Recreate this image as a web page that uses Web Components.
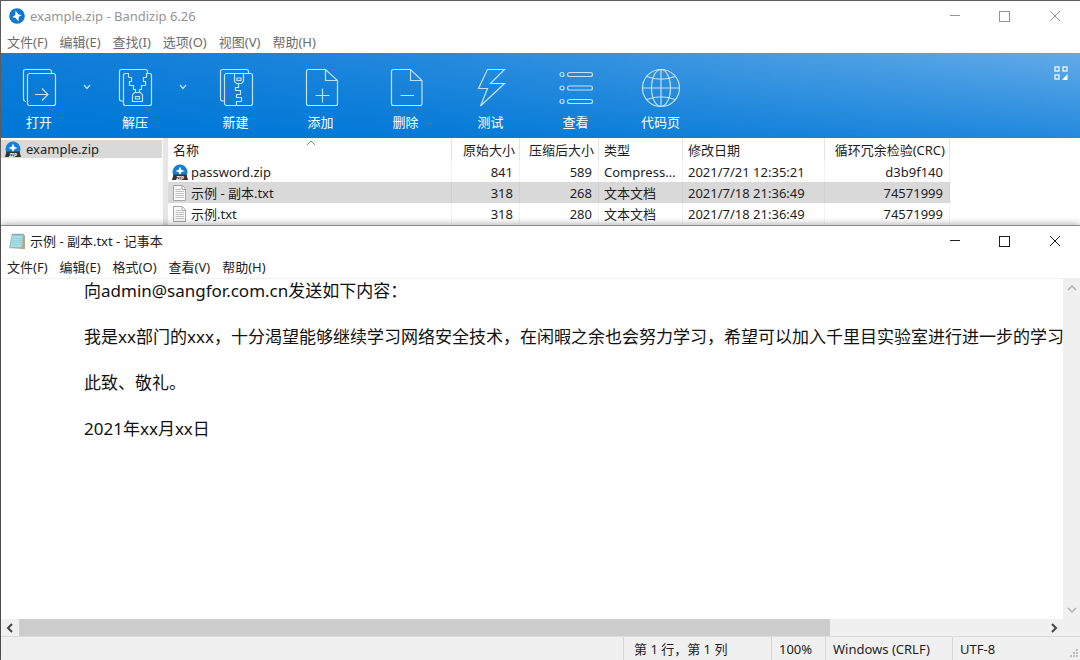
<!DOCTYPE html>
<html lang="zh-CN">
<head>
<meta charset="utf-8">
<title>example.zip - Bandizip 6.26</title>
<style>
  html, body { height: 100%; margin: 0; }
  body {
    font: 13px/20px "Noto Sans", "Noto Sans CJK SC", sans-serif;
    color: #1e1e1e;
    background: #5c5c5e;
    overflow: hidden;
  }
</style>
</head>
<body>
<desktop-view></desktop-view>

<script>
const define = (name, html, init) => customElements.define(name, class extends HTMLElement {
  connectedCallback() {
    if (this.shadowRoot) return;
    this.attachShadow({ mode: 'open' }).innerHTML = html;
    if (init) init.call(this, this.shadowRoot);
  }
});

const BUTTON = 'button{font:inherit;color:inherit;background:none;border:0;padding:0;margin:0;display:flex;align-items:center;justify-content:center}svg{display:block}';

const ICONS = {
  open: '<path d="M7 33.500H6.500Q4.500 33 4.500 31V3.500Q4.500 1.500 6.500 1.500H30.500Q32.500 1.500 32.500 3.500V5"/><rect x="8.500" y="5.500" width="28" height="32" rx="2"/><path d="M16 26.500H29M23 20.500L29 26.500L23 32.500"/>',
  extract: '<path d="M8 33H6.500Q4.500 33 4.500 31V3.500Q4.500 1.500 6.500 1.500H30.500Q32.500 1.500 32.500 3.500V5"/><path d="M13.500 9.500V5.500H10.500Q8.500 5.500 8.500 7.500V35.500Q8.500 37.500 10.500 37.500H34.500Q36.500 37.500 36.500 35.500V7.500Q36.500 5.500 34.500 5.500H31.500V9.500M13.500 9.500H16.500V13.500H14.500V17.500H18.500V21.500H20.500V24.500M31.500 9.500H28.500V13.500H30.500V17.500H26.500V21.500H24.500V24.500"/><path d="M19.500 24.500H25.500L27.500 27V33.500H17.500V27ZM20.500 28.500H24.500V31H20.500Z"/>',
  create: '<path d="M8 33H6.500Q4.500 33 4.500 31V3.500Q4.500 1.500 6.500 1.500H30.500Q32.500 1.500 32.500 3.500V5"/><rect x="8.500" y="5.500" width="28" height="32" rx="2"/><path d="M18.500 6V13.500L20.500 15.500H25.500L27.500 13.500V6M21 10H25V12.500H21ZM22.500 15.500V19.500H19.500V22.500H24.500V26.500H20.500V29.500H25.500V33.500H20.500V37"/>',
  add: '<path d="M24.500 1.500H7.500Q5.500 1.500 5.500 3.500V35.500Q5.500 37.500 7.500 37.500H34.500Q36.500 37.500 36.500 35.500V12.500ZM24.500 1.500V12.500H36.500M21.500 20.500V34.500M14.500 27.500H28.500"/>',
  remove: '<path d="M24.500 1.500H7.500Q5.500 1.500 5.500 3.500V35.500Q5.500 37.500 7.500 37.500H34Q36 37.500 36 35.500V12.500ZM24.500 1.500V12.500H36M14.500 27.500H28"/>',
  test: '<path d="M16.500 1.500H33.500L19.500 15.500H33.500L9.500 38L16.500 20.500H7.500Z"/>',
  view: '<circle cx="6" cy="6.500" r="2"/><circle cx="6" cy="20" r="2"/><circle cx="6" cy="33.500" r="2"/><rect x="11.500" y="4.500" width="25" height="4" rx="2"/><rect x="11.500" y="18" width="25" height="4" rx="2"/><rect x="11.500" y="31.500" width="25" height="4" rx="2"/>',
  codepage: '<circle cx="20" cy="20" r="18.500"/><ellipse cx="20" cy="20" rx="9.500" ry="18.500"/><path d="M20 1.500V38.500M1.500 20H38.500M6 8.500Q20 14 34 8.500M6 31.500Q20 26 34 31.500"/>'
};
const FILES = {
  zip: '<circle cx="8" cy="8" r="7.500" fill="#1280d8"/><path d="M8 2.500L9.300 5.700L12.500 7L9.300 8.300L8 11.500L6.700 8.300L3.500 7L6.700 5.700Z" fill="#fff"/><path d="M1.500 10.500H14.500L16 16H0Z" fill="#333"/><text x="8" y="15.500" text-anchor="middle" font-size="5" font-weight="700" font-style="italic" fill="#fff">ZIP</text>',
  txt: '<path d="M1.500 .500H10.500L13.500 4V15.500H1.500Z" fill="#fafafa" stroke="#a6a6a6"/><path d="M10 1V4.500H13" fill="none" stroke="#a6a6a6"/><path d="M3.500 4.500H9M3.500 6.500H12M3.500 8.500H12M3.500 10.500H12M3.500 12.500H12" stroke="#c0c0c0"/>',
  bandizip: '<circle cx="8" cy="8" r="7.800" fill="#1278cf"/><path d="M6.500 2.500L9.500 6.500L12.800 7L9.700 9L9.500 13.500L6.500 9.700L3.200 9.200L6.300 7Z" fill="#fff"/>',
  notepad: '<path d="M3 1.500H14.500L13 15H.500Z" fill="#8fcbd1" stroke="#78b0b8" stroke-width=".6"/><path d="M14.500 1.500L16 2.500V16H4L13 15Z" fill="#b7a58a"/><path d="M3.300 3H13.500L12.300 14H1.700Z" fill="#a9dde2"/><path d="M3 5.500H13M2.800 7.500H13M2.600 9.500H12.500M2.400 11.500H12.300" stroke="#8fcdd4" stroke-width=".6"/><path d="M3.500 1.200H15" stroke="#667c80" stroke-dasharray="1 1"/>'
};

define('file-icon', '<style>:host{display:block;flex:none;width:16px;height:16px}svg{display:block}</style><svg width="16" height="16" viewBox="0 0 16 16" aria-hidden="true"></svg>', function (root) {
  root.querySelector('svg').innerHTML = FILES[this.getAttribute('kind')];
});

define('title-bar', `<style>${BUTTON}
  :host{display:flex;align-items:center;height:30px;padding-left:8px}
  .title{flex:1;padding-left:5px;white-space:nowrap}
  button{width:50px;height:30px}
  svg{fill:none;stroke:currentColor}
  </style>
  <slot name="icon"></slot><span class="title"><slot></slot></span>
  <button aria-label="最小化"><svg width="12" height="12"><path d="M1 5.500H11"/></svg></button>
  <button aria-label="最大化"><svg width="12" height="12"><rect x=".500" y="1.500" width="10" height="10"/></svg></button>
  <button aria-label="关闭"><svg width="12" height="12"><path d="M1 1L11 11M11 1L1 11"/></svg></button>`);

define('menu-bar', `<style>${BUTTON}
  :host{display:flex;gap:12px;height:22px;padding-left:6px}
  button{white-space:nowrap}
  </style>`, function (root) {
  for (const label of this.getAttribute('items').split(' ')) {
    const b = document.createElement('button');
    b.textContent = label;
    root.append(b);
  }
});

define('ribbon-tool', `<style>${BUTTON}
  :host{display:flex;flex:none}
  .main{flex-direction:column;justify-content:flex-start;width:85px;height:85px;line-height:20px;gap:4px;padding-top:15px;box-sizing:border-box}
  :host([menu]) .main{width:76px}
  .drop{display:none;width:20px;height:68px}
  :host([menu]) .drop{display:flex}
  svg{fill:none;stroke:#c4e2fa;stroke-width:1.2}
  </style>
  <button class="main"><svg class="icon" width="40" height="40" viewBox="0 0 40 40" aria-hidden="true"></svg><span><slot></slot></span></button>
  <button class="drop" aria-label="更多"><svg width="8" height="6"><path d="M1 1L4 4.500L7 1"/></svg></button>`, function (root) {
  root.querySelector('.icon').innerHTML = ICONS[this.getAttribute('icon')];
});

define('tool-ribbon', `<style>${BUTTON}
  :host{display:flex;height:85px;color:#fff;background:linear-gradient(183deg,#0078d700,#0078d7 92%),linear-gradient(90deg,#1a80d8,#2f8fde 36%,#51a2e4 72%,#62abe8)}
  .layout{margin:13px 12px auto auto;width:14px;height:14px}
  </style>
  <ribbon-tool icon="open" menu>打开</ribbon-tool>
  <ribbon-tool icon="extract" menu>解压</ribbon-tool>
  <ribbon-tool icon="create">新建</ribbon-tool>
  <ribbon-tool icon="add">添加</ribbon-tool>
  <ribbon-tool icon="remove">删除</ribbon-tool>
  <ribbon-tool icon="test">测试</ribbon-tool>
  <ribbon-tool icon="view">查看</ribbon-tool>
  <ribbon-tool icon="codepage">代码页</ribbon-tool>
  <button class="layout" aria-label="布局"><svg width="14" height="14" fill="none" stroke="#e4f2fd" stroke-width="1.4"><rect x="1" y="1" width="4" height="4"/><rect x="9" y="1" width="4" height="4"/><rect x="1" y="9" width="4" height="4"/><path d="M13.500 8V14H8Z" fill="#fff" stroke="none"/></svg></button>`);

define('archive-tree', `<style>${BUTTON}
  :host{display:block;flex:none;width:162px;border-right:5px solid #e6e6e6;padding-top:2px;box-sizing:content-box}
  button{width:161px;height:18px;line-height:18px;justify-content:flex-start;gap:5px;padding-left:4px;background:#d9d9d9}
  </style><button><file-icon kind="zip"></file-icon>example.zip</button>`);

define('file-list', `<style>
  :host{display:block;flex:1;min-width:0;overflow:hidden}
  table{table-layout:fixed;border-collapse:collapse;width:782px}
  th,td{height:21px;padding:0 6px;text-align:left;font-weight:400;white-space:nowrap;overflow:hidden;text-overflow:ellipsis;line-height:20px;box-shadow:inset -1px 0 #f2f2f2}
  th{height:23px;box-shadow:inset -1px 0 #e4e4e4;padding:0 5px}
  .num{text-align:right}
  td.num{padding-right:7px}
  td:not(.num){padding-left:5px}
  .name{display:flex;align-items:center;gap:3px}
  td:first-child{padding-left:4px}
  th:first-child{position:relative}
  th svg{position:absolute;left:calc(50% - 4px);top:2px;fill:none;stroke:#888}
  tr.selected{background:#d9d9d9}
  tr.selected td{box-shadow:inset -1px 0 #d0d0d0}
  </style>
  <table>
    <colgroup><col style="width:284px"><col style="width:68px"><col style="width:79px"><col style="width:84px"><col style="width:142px"><col style="width:125px"></colgroup>
    <thead><tr><th>名称<svg width="10" height="6" aria-hidden="true"><path d="M1 5L5 1L9 5"/></svg></th><th class="num">原始大小</th><th class="num">压缩后大小</th><th>类型</th><th>修改日期</th><th class="num">循环冗余检验(CRC)</th></tr></thead>
    <tbody>
      <tr><td><span class="name"><file-icon kind="zip"></file-icon>password.zip</span></td><td class="num">841</td><td class="num">589</td><td>Compressed</td><td>2021/7/21 12:35:21</td><td class="num">d3b9f140</td></tr>
      <tr class="selected"><td><span class="name"><file-icon kind="txt"></file-icon>示例 - 副本.txt</span></td><td class="num">318</td><td class="num">268</td><td>文本文档</td><td>2021/7/18 21:36:49</td><td class="num">74571999</td></tr>
      <tr><td><span class="name"><file-icon kind="txt"></file-icon>示例.txt</span></td><td class="num">318</td><td class="num">280</td><td>文本文档</td><td>2021/7/18 21:36:49</td><td class="num">74571999</td></tr>
    </tbody>
  </table>`);

define('bandizip-window', `<style>
  :host{display:block;background:#fff}
  title-bar{color:#959595}
  menu-bar{color:#6c6c6c}
  .panes{display:flex;height:87px}
  </style>
  <title-bar><file-icon slot="icon" kind="bandizip"></file-icon>example.zip - Bandizip 6.26</title-bar>
  <menu-bar items="文件(F) 编辑(E) 查找(I) 选项(O) 视图(V) 帮助(H)"></menu-bar>
  <tool-ribbon></tool-ribbon>
  <div class="panes"><archive-tree></archive-tree><file-list></file-list></div>`);

define('text-editor', `<style>${BUTTON}
  :host{display:grid;grid-template:minmax(0,1fr) 17px / minmax(0,1fr) 17px;background:#f0f0f0}
  textarea{display:block;width:100%;height:100%;box-sizing:border-box;margin:0;border:0;outline:0;resize:none;overflow:hidden;background:#fff;color:#111;padding:0 0 0 83px;font-family:inherit;font-size:17px;line-height:23px}
  .v{display:flex;flex-direction:column;justify-content:space-between;color:#b0b0b0}
  .h{display:flex;color:#444}
  .v button{width:17px;height:18px}
  .h button{width:18px;height:17px}
  .track{flex:1}
  .thumb{width:79%;height:17px;background:#cdcdcd}
  svg{fill:none;stroke:currentColor;stroke-width:2}
  .v svg{stroke-width:1.5}
  </style>
  <textarea aria-label="文本" wrap="off" spellcheck="false">向admin@sangfor.com.cn发送如下内容：

我是xx部门的xxx，十分渴望能够继续学习网络安全技术，在闲暇之余也会努力学习，希望可以加入千里目实验室进行进一步的学习

此致、敬礼。

2021年xx月xx日</textarea>
  <div class="v"><button aria-label="向上"><svg width="10" height="8"><path d="M1 6L5 2L9 6"/></svg></button><button aria-label="向下"><svg width="10" height="8"><path d="M1 2L5 6L9 2"/></svg></button></div>
  <div class="h"><button aria-label="向左"><svg width="8" height="10"><path d="M6 1L2 5L6 9"/></svg></button><div class="track"><div class="thumb"></div></div><button aria-label="向右"><svg width="8" height="10"><path d="M2 1L6 5L2 9"/></svg></button></div>`);

define('status-bar', `<style>
  :host{display:flex;justify-content:flex-end;height:24px;background:#f0f0f0;border-top:1px solid #dcdcdc;box-sizing:border-box;line-height:24px}
  span{box-sizing:border-box;border-left:1px solid #d7d7d7;padding-left:7px;white-space:nowrap}
  .pos{width:148px;padding-left:10px}.zoom{width:54px}.eol{width:127px}.enc{width:116px}
  svg{align-self:flex-end;fill:#bdbdbd}
  </style>
  <span class="pos">第 1 行，第 1 列</span><span class="zoom">100%</span><span class="eol">Windows (CRLF)</span><span class="enc">UTF-8</span>
  <svg width="12" height="12" aria-hidden="true"><path d="M8 1h2v2h-2zM5 4h2v2h-2zM8 4h2v2h-2zM2 7h2v2h-2zM5 7h2v2h-2zM8 7h2v2h-2z"/></svg>`);

define('notepad-window', `<style>
  :host{display:flex;flex-direction:column;background:#fff;border-top:1px solid #8c8c8c;box-shadow:0 0 8px #0006}
  menu-bar{border-bottom:1px solid #f0f0f0}
  text-editor{flex:1;min-height:0}
  </style>
  <title-bar><file-icon slot="icon" kind="notepad"></file-icon>示例 - 副本.txt - 记事本</title-bar>
  <menu-bar items="文件(F) 编辑(E) 格式(O) 查看(V) 帮助(H)"></menu-bar>
  <text-editor></text-editor>
  <status-bar></status-bar>`);

define('desktop-view', `<style>
  :host{display:flex;flex-direction:column;height:100vh;box-sizing:border-box;padding:1px 0 0 1px}
  notepad-window{flex:1;min-height:0}
  </style>
  <bandizip-window></bandizip-window><notepad-window></notepad-window>`);
</script>
</body>
</html>
